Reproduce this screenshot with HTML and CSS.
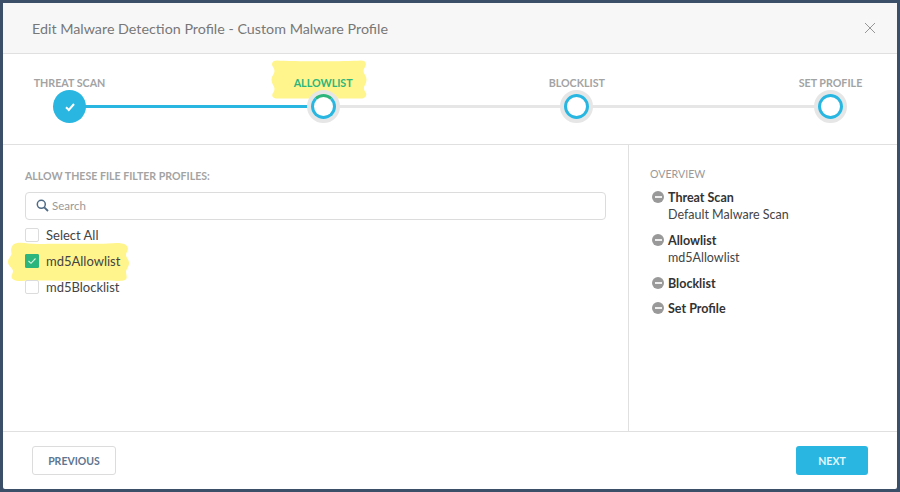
FILE: index.html
```html
<!DOCTYPE html>
<html lang="en">

<head>
    <meta charset="UTF-8">
    <title>Edit Malware Detection Profile</title>
    <link rel="stylesheet" href="styles.css">
</head>

<body>
    <div class="dialog">
        <header class="dialogHeader">
            <h1>Edit Malware Detection Profile - Custom Malware Profile</h1>
            <svg class="closeIcon" width="12" height="12" viewBox="0 0 12 12">
                <path d="M1 1L11 11M11 1L1 11" stroke="#969696" stroke-width="1" fill="none" />
            </svg>
        </header>

        <section class="stepper">
            <div class="step done">
                <span class="stepLabel">THREAT SCAN</span>
                <span class="stepDot">
                    <svg width="12" height="10" viewBox="0 0 12 10">
                        <path d="M2 5.2L4.8 8L10 2" stroke="#fff" stroke-width="2" fill="none" />
                    </svg>
                </span>
            </div>
            <div class="step active">
                <svg class="marker markerStep" width="96" height="39" viewBox="0 0 96 39">
                    <path d="M6 0.5C20 1.500 76 1.500 90 0.5C95 0.5 96 4 94 7C92 10 92 12 94 15C96 18 96 21 94 25C92 28 93 30 95 33C96 36 94 38.500 90 38.500H6C2 38.500 0 36 2 33C4 30 4 28 2 25C0 21 0 18 2 15C4 12 4 10 2 7C0 4 1 0.5 6 0.5Z" fill="#fff58c" />
                </svg>
                <span class="stepLabel">ALLOWLIST</span>
                <span class="stepDot"></span>
            </div>
            <div class="step">
                <span class="stepLabel">BLOCKLIST</span>
                <span class="stepDot"></span>
            </div>
            <div class="step">
                <span class="stepLabel">SET PROFILE</span>
                <span class="stepDot"></span>
            </div>
        </section>

        <section class="content">
            <div class="filterPane">
                <h2 class="paneTitle">ALLOW THESE FILE FILTER PROFILES:</h2>
                <div class="searchBox">
                    <svg width="13" height="13" viewBox="0 0 13 13">
                        <circle cx="5.300" cy="5.300" r="4" stroke="#4f6a85" stroke-width="1.500" fill="none" />
                        <path d="M8.300 8.300L12 12" stroke="#4f6a85" stroke-width="1.800" fill="none" />
                    </svg>
                    <span>Search</span>
                </div>
                <ul class="checkList">
                    <li><span class="checkBox"></span>Select All</li>
                    <li class="picked">
                        <svg class="marker markerRow" width="121" height="40" viewBox="0 0 121 40">
                            <path d="M9 1C16 0 22 2.500 32 2C52 1 80 2.500 100 1.500C108 1 117 0 119.500 5C121 8 118 10 118 13C118 16 121 17 121 21C121 25 118 27 118 30C118 33 120 36 117 38C112 40 106 38 96 38.500C70 39.500 40 38 24 38.500C16 39 8 40 4.500 37C2 34 5 32 5 29C5 26 0 24 0 20C0 16 4 14 3.500 11C2.500 8 3 2 9 1Z" fill="#fff58c" />
                        </svg>
                        <span class="checkBox checked">
                            <svg width="10" height="8" viewBox="0 0 10 8">
                                <path d="M1.500 4L4 6.300L8.500 1.500" stroke="#d8f5e0" stroke-width="1.100" fill="none" />
                            </svg>
                        </span>md5Allowlist
                    </li>
                    <li><span class="checkBox"></span>md5Blocklist</li>
                </ul>
            </div>

            <aside class="overview">
                <h2 class="paneTitle overviewTitle">OVERVIEW</h2>
                <div class="overviewItem">
                    <div class="overviewName"><span class="minusIcon"></span>Threat Scan</div>
                    <div class="overviewValue">Default Malware Scan</div>
                </div>
                <div class="overviewItem">
                    <div class="overviewName"><span class="minusIcon"></span>Allowlist</div>
                    <div class="overviewValue">md5Allowlist</div>
                </div>
                <div class="overviewItem">
                    <div class="overviewName"><span class="minusIcon"></span>Blocklist</div>
                </div>
                <div class="overviewItem">
                    <div class="overviewName"><span class="minusIcon"></span>Set Profile</div>
                </div>
            </aside>
        </section>

        <footer class="dialogFooter">
            <button class="btn btnPrevious">PREVIOUS</button>
            <button class="btn btnNext">NEXT</button>
        </footer>
    </div>
</body>

</html>
```

FILE: styles.css
```css
*,
*::before,
*::after {
    box-sizing: border-box;
}

body {
    margin: 0;
    width: 900px;
    height: 492px;
    padding: 3px;
    overflow: hidden;
    background-color: #3b5068;
    font-family: 'Lato', sans-serif;
    color: #333;
}

.dialog {
    width: 894px;
    height: 486px;
    display: flex;
    flex-direction: column;
    background-color: #fff;
    border-radius: 2px;
}

.dialogHeader {
    height: 51px;
    flex: none;
    display: flex;
    align-items: center;
    justify-content: space-between;
    padding: 0 21px 0 29px;
    background-color: #f7f7f7;
    border-bottom: 1px solid #e0e0e0;
}

.dialogHeader h1 {
    margin: 0;
    font-size: 14.300px;
    font-weight: 400;
    color: #777;
}

.closeIcon {
    display: block;
}

.stepper {
    height: 91px;
    flex: none;
    display: flex;
    justify-content: space-between;
    padding: 0 26px;
    border-bottom: 1px solid #e0e0e0;
}

.step {
    position: relative;
    width: 81px;
    padding-top: 22px;
    display: flex;
    flex-direction: column;
    align-items: center;
}

.step:not(:last-child)::after {
    content: "";
    position: absolute;
    left: 40px;
    top: 51px;
    width: 254px;
    height: 3px;
    background-color: #e6e6e6;
}

.step.done::after {
    background-color: #29b6e0;
}

.stepLabel {
    position: relative;
    z-index: 1;
    height: 13px;
    font-size: 10.700px;
    line-height: 13px;
    font-weight: 700;
    color: #a3a3a3;
    white-space: nowrap;
}

.stepDot {
    position: relative;
    z-index: 1;
    width: 33px;
    height: 33px;
    margin-top: 1px;
    display: flex;
    align-items: center;
    justify-content: center;
    background-color: #fff;
    border-radius: 50%;
    border: 4px solid #e6e6e6;
}

.stepDot::before {
    content: "";
    width: 100%;
    height: 100%;
    border: 3px solid #29b6e0;
    border-radius: 50%;
}

.done .stepDot {
    border: none;
    background-color: #29b6e0;
}

.done .stepDot::before {
    display: none;
}

.active .stepLabel {
    color: #2cb67d;
}

.active .stepDot::before {
    border-top-color: #2cb67d;
}

.marker {
    position: absolute;
    display: block;
}

.markerStep {
    left: -12px;
    top: 6px;
}

.markerRow {
    z-index: -1;
    left: -17px;
    top: -6px;
}

.content {
    flex: 1;
    display: flex;
    min-height: 0;
}

.filterPane {
    width: 626px;
    flex: none;
    padding: 25px 22px 0 22px;
    border-right: 1px solid #e0e0e0;
}

.paneTitle {
    margin: 0;
    font-size: 10.600px;
    line-height: 13px;
    font-weight: 700;
    color: #a3a3a3;
}

.searchBox {
    height: 28px;
    margin-top: 9px;
    display: flex;
    align-items: center;
    gap: 3px;
    padding: 0 0 1px 10px;
    font-size: 11.500px;
    color: #999;
    border: 1px solid #dcdcdc;
    border-radius: 4px;
}

.checkList {
    margin: 2px 0 0 0;
    padding: 0;
    list-style: none;
}

.checkList li {
    position: relative;
    height: 26px;
    display: flex;
    align-items: center;
    font-size: 13px;
    color: #444;
}

.checkBox {
    position: relative;
    width: 14px;
    height: 14px;
    margin-right: 7px;
    display: flex;
    align-items: center;
    justify-content: center;
    border: 1px solid #dcdcdc;
    border-radius: 2px;
}

.checkBox.checked {
    background-color: #2cb67d;
    border-color: #2cb67d;
    border-radius: 1px;
}

.checkList .picked {
    z-index: 0;
}

.overview {
    flex: 1;
    padding: 23px 0 0 21px;
}

.overviewTitle {
    font-weight: 400;
    color: #999;
    margin-bottom: 8px;
}

.overviewItem {
    margin-bottom: 9px;
}

.overviewName {
    display: flex;
    align-items: center;
    height: 16px;
    font-size: 12.500px;
    font-weight: 700;
    color: #333;
}

.overviewValue {
    margin-top: 2px;
    padding-left: 18px;
    height: 16px;
    line-height: 16px;
    font-size: 12.500px;
    color: #444;
}

.minusIcon {
    position: relative;
    width: 12px;
    height: 12px;
    margin: 0 4px 0 2px;
    border-radius: 50%;
    background-color: #999;
}

.minusIcon::after {
    content: "";
    position: absolute;
    left: 2.500px;
    right: 2.500px;
    top: 5px;
    height: 2px;
    background-color: #eee;
}

.dialogFooter {
    height: 58px;
    flex: none;
    display: flex;
    align-items: center;
    justify-content: space-between;
    padding: 0 29px;
    border-top: 1px solid #e0e0e0;
}

.btn {
    height: 29px;
    padding: 0;
    font-family: 'Lato', sans-serif;
    font-size: 10.500px;
    font-weight: 700;
    border-radius: 3px;
}

.btnPrevious {
    width: 84px;
    color: #5f7690;
    background-color: #fff;
    border: 1px solid #dcdcdc;
}

.btnNext {
    width: 72px;
    color: #e4f6fc;
    background-color: #29b6e0;
    border: none;
}
```
